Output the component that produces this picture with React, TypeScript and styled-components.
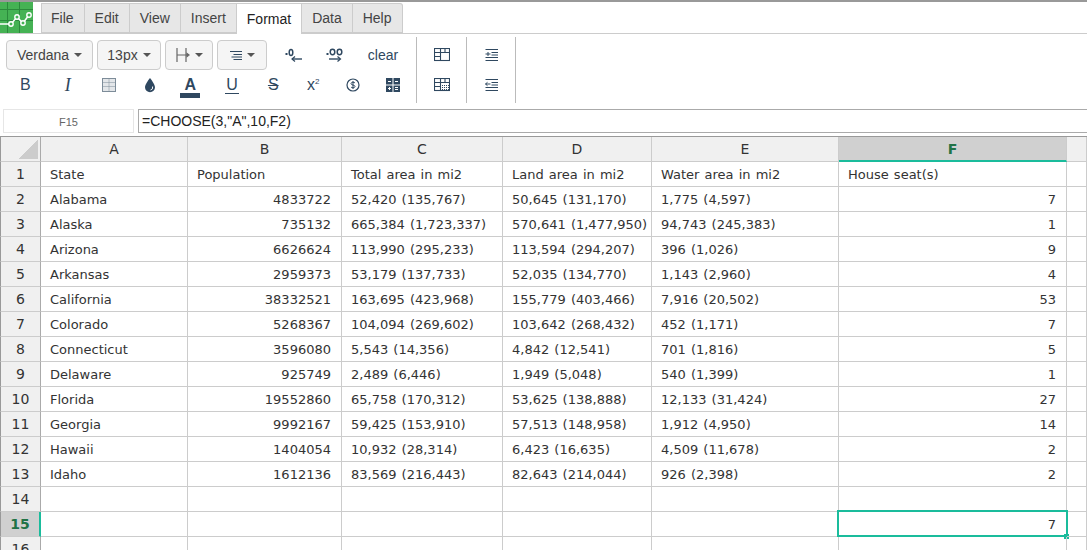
import React from "react"
import styled, { createGlobalStyle } from "styled-components"

const ink = "#2f4860"
const teal = "#1abc9c"

const rows: string[][] = [
  ["State", "Population", "Total area in mi2", "Land area in mi2", "Water area in mi2", "House seat(s)"],
  ["Alabama", "4833722", "52,420 (135,767)", "50,645 (131,170)", "1,775 (4,597)", "7"],
  ["Alaska", "735132", "665,384 (1,723,337)", "570,641 (1,477,950)", "94,743 (245,383)", "1"],
  ["Arizona", "6626624", "113,990 (295,233)", "113,594 (294,207)", "396 (1,026)", "9"],
  ["Arkansas", "2959373", "53,179 (137,733)", "52,035 (134,770)", "1,143 (2,960)", "4"],
  ["California", "38332521", "163,695 (423,968)", "155,779 (403,466)", "7,916 (20,502)", "53"],
  ["Colorado", "5268367", "104,094 (269,602)", "103,642 (268,432)", "452 (1,171)", "7"],
  ["Connecticut", "3596080", "5,543 (14,356)", "4,842 (12,541)", "701 (1,816)", "5"],
  ["Delaware", "925749", "2,489 (6,446)", "1,949 (5,048)", "540 (1,399)", "1"],
  ["Florida", "19552860", "65,758 (170,312)", "53,625 (138,888)", "12,133 (31,424)", "27"],
  ["Georgia", "9992167", "59,425 (153,910)", "57,513 (148,958)", "1,912 (4,950)", "14"],
  ["Hawaii", "1404054", "10,932 (28,314)", "6,423 (16,635)", "4,509 (11,678)", "2"],
  ["Idaho", "1612136", "83,569 (216,443)", "82,643 (214,044)", "926 (2,398)", "2"],
  ["", "", "", "", "", ""],
  ["", "", "", "", "", "7"],
  ["", "", "", "", "", ""],
]
const columns = ["A", "B", "C", "D", "E", "F"]
const tabs = ["File", "Edit", "View", "Insert", "Format", "Data", "Help"]

const Logo = () => (
  <LogoBox>
    <svg width="33" height="31" viewBox="0 0 33 31">
      <rect width="33" height="31" fill="#45b254" />
      <path d="M0 7.5H33M0 18.5H33M7.5 0V31M19.5 0V31" stroke="#2b8a3c" strokeWidth="1" />
      <path d="M0 22H11L17 15L23 21L29 13" fill="none" stroke="#fff" strokeWidth="1.5" />
      <circle cx="11" cy="22" r="2.2" fill="#45b254" stroke="#fff" strokeWidth="1.4" />
      <circle cx="17" cy="15" r="2.2" fill="#45b254" stroke="#fff" strokeWidth="1.4" />
      <circle cx="23" cy="21" r="2.2" fill="#45b254" stroke="#fff" strokeWidth="1.4" />
      <circle cx="29" cy="13" r="2.2" fill="#45b254" stroke="#fff" strokeWidth="1.4" />
    </svg>
  </LogoBox>
)

const Icon = ({ w = 16, h = 16, children }: { w?: number; h?: number; children: React.ReactNode }) => (
  <svg width={w} height={h} viewBox={`0 0 ${w} ${h}`} fill="none" stroke={ink} strokeWidth="1">
    {children}
  </svg>
)

const BorderIcon = () => (
  <Icon>
    <rect x="1.5" y="1.5" width="13" height="13" stroke="#7d8c99" fill="#e3e6e9" />
    <path d="M1.5 5.5H14.5M1.5 9.5H14.5M8 1.5V14.5" stroke="#7d8c99" strokeDasharray="1 1" />
  </Icon>
)
const DropIcon = () => (
  <Icon>
    <path d="M8 1C8 1 3 7 3 10.2A5 5 0 0 0 13 10.2C13 7 8 1 8 1Z" fill={ink} stroke="none" />
    <path d="M10.6 9.5A2.8 2.8 0 0 1 8.5 13" stroke="#fff" />
  </Icon>
)
const HeightIcon = () => (
  <svg width="14" height="16" viewBox="0 0 14 16" fill="none" stroke="#666" strokeWidth="1.2">
    <path d="M1 1V15M10 1V15M1 8H11" />
    <path d="M11 6.5L13 8L11 9.5Z" fill="#666" />
  </svg>
)
const AlignIcon = () => (
  <Icon w={12} h={11}>
    <path d="M0 1.5H12M3.5 4.5H12M1.5 7H12M3.5 9.5H12" />
  </Icon>
)
const DecimalLess = () => (
  <svg width="18" height="15" viewBox="0 0 18 15" fill="none" stroke={ink}>
    <rect x="0.5" y="5" width="2" height="2" fill={ink} stroke="none" />
    <ellipse cx="6" cy="4.5" rx="1.8" ry="3" strokeWidth="1.5" />
    <path d="M7 11H17" strokeWidth="1.4" />
    <path d="M10 8.5L7 11L10 13.5" strokeWidth="1.2" />
  </svg>
)
const DecimalMore = () => (
  <svg width="18" height="15" viewBox="0 0 18 15" fill="none" stroke={ink}>
    <rect x="0.5" y="5" width="2" height="2" fill={ink} stroke="none" />
    <ellipse cx="6.5" cy="4" rx="2.3" ry="2.7" strokeWidth="1.5" />
    <ellipse cx="13.5" cy="4" rx="2.3" ry="2.7" strokeWidth="1.5" />
    <path d="M3 11H14" strokeWidth="1.4" />
    <path d="M11.5 8.5L14.5 11L11.5 13.5" strokeWidth="1.2" />
  </svg>
)
const DollarIcon = () => (
  <Icon>
    <circle cx="8" cy="8" r="6" strokeWidth="1.2" />
    <path d="M10 6C9.6 5 6 4.8 6 6.6C6 8.5 10 7.6 10 9.5C10 11.2 6.4 11 6 10M8 4V12" />
  </Icon>
)
const CalcIcon = () => (
  <Icon w={14} h={14}>
    <rect width="14" height="14" fill={ink} stroke="none" />
    <path d="M7 0V14M0 7H14" stroke="#fff" />
    <path d="M2 3.5H5M9 3.5H12M9 9.5H12M9 11.5H12M2 10.5H5M3.5 9V12" stroke="#fff" />
  </Icon>
)
const MergeIcon = () => (
  <Icon h={14}>
    <rect x="0.5" y="0.5" width="15" height="12" strokeWidth="1.1" />
    <path d="M0.5 4.5H15.5M0.5 8.5H6.5M6.5 0.5V12.5M11 0.5V4.5" strokeWidth="1.1" />
  </Icon>
)
const SplitIcon = () => (
  <Icon h={14}>
    <rect x="0.5" y="0.5" width="15" height="12" strokeWidth="1.1" />
    <path d="M0.5 4.5H15.5M0.5 8.5H6.5M6.5 0.5V12.5M11 0.5V4.5" strokeWidth="1.1" />
    <path d="M8 7.5H15M8 9.5H15M8 11.5H15" strokeDasharray="1 1" />
  </Icon>
)
const IndentIcon = ({ out }: { out?: boolean }) => (
  <Icon w={13} h={12}>
    <path d="M0.5 0.5H13M6.5 3.5H13M6.5 6H13M0.5 8.5H13M0.5 11.5H13" />
    <path d={out ? "M0.5 5H5.5M2.5 3.3L0.5 5L2.5 6.7" : "M0.5 5H5.5M3 3V7"} />
  </Icon>
)

const App = () => {
  return (
    <Page>
      <GlobalStyle />
      <MenuBar>
        <Logo />
        <Tabs>
          {tabs.map((t) => (
            <Tab key={t} $active={t === "Format"}>
              {t}
            </Tab>
          ))}
        </Tabs>
      </MenuBar>
      <Toolbar>
        <ToolGroup>
          <ToolRow>
            <SelectButton $width={87}>
              Verdana <Caret />
            </SelectButton>
            <SelectButton $width={64}>
              13px <Caret />
            </SelectButton>
            <SelectButton $width={48}>
              <HeightIcon /> <Caret />
            </SelectButton>
            <SelectButton $width={50}>
              <AlignIcon /> <Caret />
            </SelectButton>
            <IconRow>
              <ToolIcon $width={41}>
                <DecimalLess />
              </ToolIcon>
              <ToolIcon $width={41}>
                <DecimalMore />
              </ToolIcon>
              <ClearText>clear</ClearText>
            </IconRow>
          </ToolRow>
          <FormatRow>
            <ToolIcon $width={42.5}>
              <Glyph>B</Glyph>
            </ToolIcon>
            <ToolIcon $width={42.5}>
              <ItalicGlyph>I</ItalicGlyph>
            </ToolIcon>
            <ToolIcon $width={40.5}>
              <BorderIcon />
            </ToolIcon>
            <ToolIcon $width={40}>
              <DropIcon />
            </ToolIcon>
            <ToolIcon $width={41.5}>
              <ColorGlyph>A</ColorGlyph>
            </ToolIcon>
            <ToolIcon $width={42}>
              <UnderGlyph>U</UnderGlyph>
            </ToolIcon>
            <ToolIcon $width={40.5}>
              <StrikeGlyph>S</StrikeGlyph>
            </ToolIcon>
            <ToolIcon $width={39.5}>
              <Glyph>
                x<Sup>2</Sup>
              </Glyph>
            </ToolIcon>
            <ToolIcon $width={40}>
              <DollarIcon />
            </ToolIcon>
            <ToolIcon $width={40}>
              <CalcIcon />
            </ToolIcon>
          </FormatRow>
        </ToolGroup>
        <SideGroup $width={50}>
          <MergeIcon />
          <SplitIcon />
        </SideGroup>
        <SideGroup $width={49}>
          <IndentIcon />
          <IndentIcon out />
        </SideGroup>
      </Toolbar>
      <FormulaBar>
        <NameBox>F15</NameBox>
        <FormulaInput>=CHOOSE(3,"A",10,F2)</FormulaInput>
      </FormulaBar>
      <Sheet>
        <Corner />
        {columns.map((c) => (
          <ColHead key={c} $selected={c === "F"}>
            {c}
          </ColHead>
        ))}
        <ColHead />
        {rows.map((row, i) => (
          <React.Fragment key={i}>
            <RowHead $selected={i === 14}>{i + 1}</RowHead>
            {row.map((value, j) => (
              <Cell key={j} $right={/^\d+$/.test(value)}>
                {value}
                {i === 14 && j === 5 && (
                  <Selection>
                    <Handle />
                  </Selection>
                )}
              </Cell>
            ))}
            <Cell />
          </React.Fragment>
        ))}
      </Sheet>
    </Page>
  )
}

const GlobalStyle = createGlobalStyle`
  html, body {
    margin: 0;
    padding: 0;
    background: #fff;
    overflow: hidden;
  }
`
const Page = styled.div`
  width: 1087px;
  height: 550px;
  overflow: hidden;
  font-family: "Liberation Sans", Arial, sans-serif;
  border-top: 2px solid #999;
  box-sizing: border-box;
`
const MenuBar = styled.div`
  display: flex;
  height: 32px;
  border-bottom: 1px solid #ccc;
  box-sizing: border-box;
`
const LogoBox = styled.div`
  width: 33px;
  height: 31px;
  line-height: 0;
`
const Tabs = styled.div`
  display: flex;
  margin-left: 8px;
  padding-top: 1px;
`
const Tab = styled.div<{ $active?: boolean }>`
  height: ${(p) => (p.$active ? 31 : 30)}px;
  padding: 0 10px ${(p) => (p.$active ? 1 : 0)}px;
  display: flex;
  align-items: center;
  box-sizing: border-box;
  font-size: 14px;
  color: ${(p) => (p.$active ? "#222" : "#444")};
  background: ${(p) => (p.$active ? "#fff" : "#e7e7e7")};
  border: 1px solid #ccc;
  border-left-width: 0;
  border-bottom-width: ${(p) => (p.$active ? 0 : 1)}px;
  &:first-child {
    border-left-width: 1px;
    padding-left: 9px;
  }
  &:last-child {
    border-radius: 0 3px 0 0;
  }
`
const Toolbar = styled.div`
  display: flex;
  height: 75px;
  padding-top: 3px;
  box-sizing: border-box;
`
const ToolGroup = styled.div`
  width: 417px;
  padding: 3px 0 0 6px;
  box-sizing: border-box;
  border-right: 1px solid #bbb;
  height: 66px;
`
const ToolRow = styled.div`
  display: flex;
  gap: 4px;
  height: 30px;
`
const SelectButton = styled.div<{ $width: number }>`
  width: ${(p) => p.$width}px;
  height: 30px;
  display: flex;
  align-items: center;
  justify-content: center;
  gap: 5px;
  box-sizing: border-box;
  border: 1px solid #ccc;
  border-radius: 4px;
  background: #f5f5f5;
  font-size: 14px;
  color: #444;
`
const Caret = styled.span`
  width: 0;
  height: 0;
  border-left: 4px solid transparent;
  border-right: 4px solid transparent;
  border-top: 4px solid #555;
`
const IconRow = styled.div`
  display: flex;
  align-items: center;
  margin-left: 2px;
`
const ToolIcon = styled.div<{ $width: number }>`
  width: ${(p) => p.$width}px;
  height: 30px;
  display: flex;
  align-items: center;
  justify-content: center;
  color: ${ink};
`
const ClearText = styled.div`
  width: 56px;
  text-align: center;
  font-size: 14px;
  color: ${ink};
`
const FormatRow = styled.div`
  display: flex;
  margin-left: -2px;
  height: 30px;
`
const Glyph = styled.span`
  font-size: 16px;
  color: ${ink};
`
const Sup = styled.sup`
  font-size: 8px;
  line-height: 0;
`
const ItalicGlyph = styled(Glyph)`
  font-family: "Liberation Serif", serif;
  font-style: italic;
  font-size: 18px;
`
const ColorGlyph = styled(Glyph)`
  width: 20px;
  text-align: center;
  font-weight: bold;
  border-bottom: 5px solid ${ink};
  line-height: 17px;
  margin-top: 4px;
`
const UnderGlyph = styled(Glyph)`
  width: 14px;
  text-align: center;
  border-bottom: 1px solid ${ink};
  line-height: 16px;
`
const StrikeGlyph = styled(Glyph)`
  text-decoration: line-through;
  padding: 0 2px;
`
const SideGroup = styled.div<{ $width: number }>`
  width: ${(p) => p.$width}px;
  height: 66px;
  padding-top: 3px;
  box-sizing: border-box;
  display: grid;
  grid-template-rows: 30px 30px;
  align-items: center;
  justify-items: center;
  border-right: 1px solid #bbb;
`
const FormulaBar = styled.div`
  display: flex;
  gap: 4px;
  height: 24px;
  padding: 0 0 0 3px;
  margin-bottom: 3px;
  box-sizing: border-box;
`
const NameBox = styled.div`
  width: 131px;
  height: 24px;
  box-sizing: border-box;
  border: 1px solid #e6e6e6;
  text-align: center;
  font-size: 11px;
  line-height: 24px;
  color: #666;
`
const FormulaInput = styled.div`
  flex: 1;
  height: 24px;
  box-sizing: border-box;
  border: 1px solid #aaa;
  border-right: 0;
  padding-left: 3px;
  font-size: 14px;
  line-height: 22px;
  color: #222;
`
const Sheet = styled.div`
  display: grid;
  grid-template-columns: 41px 147px 154px 161px 149px 187px 228px 20px;
  grid-auto-rows: 25px;
  border-top: 1px solid #999;
  font-family: "DejaVu Sans", Verdana, sans-serif;
`
const Corner = styled.div`
  background: #f0f0f0 linear-gradient(135deg, transparent 50%, #ccc 50%) no-repeat right 2px bottom 2px / 20px 20px;
  border-left: 1px solid #999;
  border-right: 1px solid #aaa;
  border-bottom: 1px solid #ccc;
  box-sizing: border-box;
`
const ColHead = styled.div<{ $selected?: boolean }>`
  display: flex;
  align-items: center;
  justify-content: center;
  box-sizing: border-box;
  font-size: 14px;
  font-weight: ${(p) => (p.$selected ? "bold" : "normal")};
  color: ${(p) => (p.$selected ? "#217346" : "#333")};
  background: ${(p) => (p.$selected ? "#d0d0d0" : "#f0f0f0")};
  border-right: 1px solid #ccc;
  border-bottom: ${(p) => (p.$selected ? `2px solid ${teal}` : "1px solid #ccc")};
`
const RowHead = styled.div<{ $selected?: boolean }>`
  display: flex;
  align-items: center;
  justify-content: center;
  box-sizing: border-box;
  font-size: 14px;
  font-weight: ${(p) => (p.$selected ? "bold" : "normal")};
  color: ${(p) => (p.$selected ? "#217346" : "#333")};
  background: ${(p) => (p.$selected ? "#d0d0d0" : "#f0f0f0")};
  border-left: 1px solid #999;
  border-bottom: 1px solid #ccc;
  border-right: ${(p) => (p.$selected ? `2px solid ${teal}` : "1px solid #aaa")};
`
const Cell = styled.div<{ $right?: boolean }>`
  position: relative;
  box-sizing: border-box;
  padding: 0 10px 0 9px;
  font-size: 13px;
  word-spacing: 1px;
  line-height: 26px;
  white-space: nowrap;
  color: #333;
  text-align: ${(p) => (p.$right ? "right" : "left")};
  border-right: 1px solid #ccc;
  border-bottom: 1px solid #ccc;
`
const Selection = styled.div`
  position: absolute;
  left: -2px;
  top: -2px;
  right: -2px;
  bottom: -1px;
  border: 2px solid ${teal};
`
const Handle = styled.div`
  position: absolute;
  right: -3px;
  bottom: -4px;
  width: 5px;
  height: 5px;
  background: ${teal};
`
export default App
